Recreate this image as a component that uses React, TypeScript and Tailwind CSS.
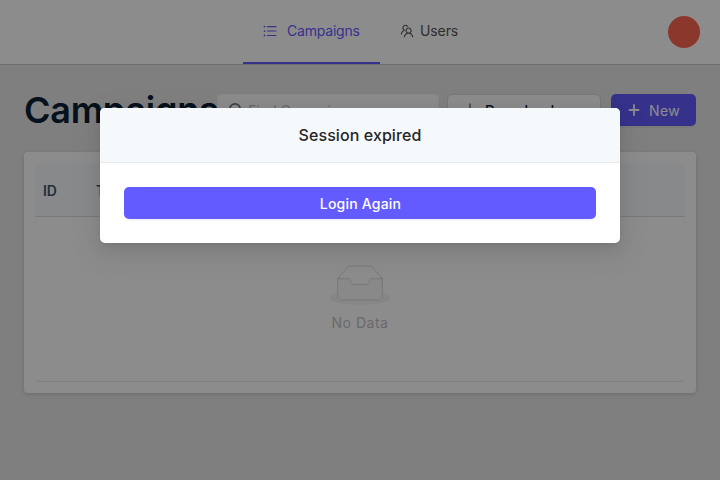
import React from "react";
import { AiOutlineUnorderedList, AiOutlineTeam } from "react-icons/ai";

function Header() {
  return (
    <header className="flex h-[65px] items-stretch border-b border-[#c8c8c8] bg-white">
      <div className="w-[243px]" />
      <nav className="flex flex-1 text-[14px]">
        <a className="flex w-[137px] items-center border-b-2 border-[#635bff] pl-[19px] text-[#635bff]">
          <AiOutlineUnorderedList size={16} />
          <span className="ml-[9px] pb-px tracking-[-0.2px]">Campaigns</span>
        </a>
        <a className="flex items-center pb-[2px] pl-[19px] text-[#555]">
          <AiOutlineTeam size={16} />
          <span className="ml-[5px] pb-px tracking-[-0.1px]">Users</span>
        </a>
      </nav>
      <div className="mr-5 h-8 w-8 self-center rounded-full bg-[#ff6550]" />
    </header>
  );
}

function SearchIcon() {
  return (
    <svg width="16" height="16" viewBox="0 0 16 16" fill="none" stroke="#6f7b8b" strokeWidth="1.8">
      <circle cx="7" cy="7" r="5.2" />
      <path d="M11 11l4 4" />
    </svg>
  );
}

function DownloadIcon() {
  return (
    <svg width="14" height="14" viewBox="0 0 14 14" fill="none" stroke="#6f7b8b" strokeWidth="1.5">
      <path d="M7 0.5v8.5M4 6.5l3 3 3-3M1.5 10v3h11v-3" />
    </svg>
  );
}

function PlusIcon() {
  return (
    <svg width="14" height="14" viewBox="0 0 14 14" stroke="white" strokeWidth="1.8">
      <path d="M7 1.2v11.6M1.8 7h10.4" />
    </svg>
  );
}

function Toolbar() {
  return (
    <div className="flex h-8 items-center">
      <h1 className="w-[193px] text-[36px] leading-8 font-semibold tracking-[-0.25px] whitespace-nowrap text-[#0a1f33]">
        Campaigns
      </h1>
      <div className="flex h-8 w-[222px] items-center rounded-[4px] border border-[#f6f8fc] bg-white pl-[10px]">
        <SearchIcon />
        <span className="ml-[4px] text-[14px] text-[#bfbfbf]">Find Campaign</span>
      </div>
      <button className="ml-2 flex h-8 w-[154px] items-center rounded-[5px] border border-[#d9d9d9] bg-white pl-[15px] text-[14px] font-medium text-[#0a1f33]">
        <DownloadIcon />
        <span className="ml-2 tracking-[0.3px]">Download</span>
      </button>
      <button className="ml-[10px] flex h-8 w-[85px] items-center rounded-[5px] bg-[#635bff] pl-4 text-[14px] text-white shadow-[0_2px_0_rgba(0,0,0,0.045)]">
        <PlusIcon />
        <span className="ml-2 tracking-[0.4px]">New</span>
      </button>
    </div>
  );
}

function EmptyIcon() {
  return (
    <svg width="62" height="40" viewBox="0 0 64 41">
      <g transform="translate(0 1)" fill="none" fillRule="evenodd">
        <ellipse fill="#f5f5f5" cx="32" cy="33" rx="32" ry="7" />
        <g fillRule="nonzero" stroke="#d9d9d9">
          <path d="M55 12.76L44.854 1.258C44.367.474 43.656 0 42.907 0H21.093c-.749 0-1.46.474-1.947 1.257L9 12.761V22h46v-9.24z" />
          <path
            d="M41.613 15.931c0-1.605.994-2.93 2.227-2.931H55v18.137C55 33.26 53.68 35 52.05 35h-40.1C10.32 35 9 33.259 9 31.137V13h11.16c1.233 0 2.227 1.323 2.227 2.928v.022c0 1.605 1.005 2.901 2.237 2.901h14.752c1.232 0 2.237-1.308 2.237-2.913v-.007z"
            fill="#fafafa"
          />
        </g>
      </g>
    </svg>
  );
}

function CampaignTable() {
  return (
    <section className="mt-[26px] h-[241px] rounded-[4px] bg-white px-[11px] pt-[11px] shadow-[0_1px_4px_rgba(0,0,0,0.16)]">
      <div className="flex h-[54px] items-center rounded-t-[4px] border-b border-[#dcdcdc] bg-[#f6f9fc] pt-[2px] text-[14px] font-semibold text-[#425466]">
        <span className="w-[61px] pl-[8px] tracking-[-0.2px]">ID</span>
        <span>Title</span>
      </div>
      <div className="flex h-[165px] flex-col items-center rounded-b-[4px] border-b border-[#e8e8e8] pt-[48px]">
        <EmptyIcon />
        <p className="mt-[7px] text-[14px] leading-[22px] tracking-[0.5px] text-[#bfbfbf]">No Data</p>
      </div>
    </section>
  );
}

function SessionDialog() {
  return (
    <div className="absolute inset-0 flex items-start justify-center bg-black/45 pt-[108px]">
      <div
        role="dialog"
        className="h-[135px] w-[520px] overflow-hidden rounded-[5px] bg-white shadow-[0_3px_6px_-4px_rgba(0,0,0,0.12),0_6px_16px_0_rgba(0,0,0,0.08),0_9px_28px_8px_rgba(0,0,0,0.05)]"
      >
        <h2 className="flex h-[55px] items-center justify-center border-b border-[#e8e8e8] bg-[#f6f9fc] text-[16px] font-medium tracking-[0.08px] text-[#262626]">
          Session expired
        </h2>
        <div className="p-6">
          <button className="flex h-8 w-full items-center justify-center rounded-[5px] bg-[#635bff] pl-px text-[14px] font-medium tracking-[0.2px] text-white shadow-[0_2px_0_rgba(0,0,0,0.045)]">
            Login Again
          </button>
        </div>
      </div>
    </div>
  );
}

export default function App() {
  return (
    <div className="relative h-[480px] w-[720px] overflow-hidden bg-[#e8e8e8] font-['Inter',sans-serif]">
      <Header />
      <main className="px-6 pt-[29px]">
        <Toolbar />
        <CampaignTable />
      </main>
      <SessionDialog />
    </div>
  );
}
